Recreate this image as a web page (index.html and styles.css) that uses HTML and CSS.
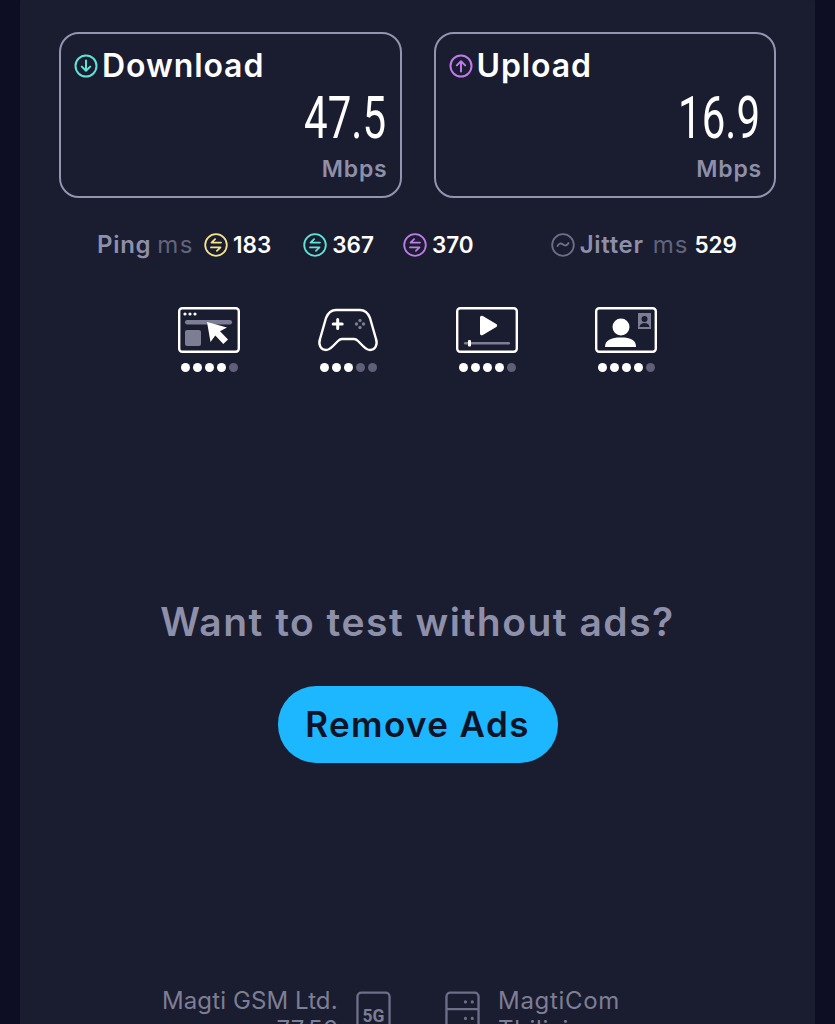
FILE: index.html
```html
<!DOCTYPE html>
<html lang="en">
<head>
    <meta charset="UTF-8">
    <meta name="viewport" content="width=device-width, initial-scale=1.0">
    <title>Speed test result</title>
    <link rel="stylesheet" href="styles.css">
</head>
<body>
    <div class="panel">
        <div class="speed-row">
            <div class="speed-card">
                <div class="speed-title">
                    <svg class="round-icon" viewBox="0 0 24 24" fill="none" stroke="#5fe3d6" stroke-width="2" stroke-linecap="round" stroke-linejoin="round">
                        <circle cx="12" cy="12" r="10.5"/>
                        <path d="M12 6.5v10M7.8 12.6l4.2 4.2 4.2-4.2"/>
                    </svg>
                    Download
                </div>
                <div class="speed-value">47.5</div>
                <div class="speed-unit">Mbps</div>
            </div>
            <div class="speed-card">
                <div class="speed-title">
                    <svg class="round-icon" viewBox="0 0 24 24" fill="none" stroke="#c07ae8" stroke-width="2" stroke-linecap="round" stroke-linejoin="round">
                        <circle cx="12" cy="12" r="10.5"/>
                        <path d="M12 17.5v-10M7.8 11.4l4.2-4.2 4.2 4.2"/>
                    </svg>
                    Upload
                </div>
                <div class="speed-value">16.9</div>
                <div class="speed-unit">Mbps</div>
            </div>
        </div>

        <div class="stats-row">
            <span class="stat-label">Ping</span>
            <span class="stat-unit">ms</span>
            <svg class="stat-icon first-icon" viewBox="0 0 24 24" fill="none" stroke="#f3e38a" stroke-width="1.8" stroke-linecap="round" stroke-linejoin="round">
                <circle cx="12" cy="12" r="10.8"/>
                <path d="M17 9.6H7.5l3.6-3.4M7 14.4h9.5l-3.600 3.400"/>
            </svg>
            <span class="stat-num">183</span>
            <svg class="stat-icon second-icon" viewBox="0 0 24 24" fill="none" stroke="#5fe3d6" stroke-width="1.8" stroke-linecap="round" stroke-linejoin="round">
                <circle cx="12" cy="12" r="10.8"/>
                <path d="M17 9.6H7.5l3.6-3.4M7 14.4h9.5l-3.600 3.400"/>
            </svg>
            <span class="stat-num">367</span>
            <svg class="stat-icon third-icon" viewBox="0 0 24 24" fill="none" stroke="#c07ae8" stroke-width="1.8" stroke-linecap="round" stroke-linejoin="round">
                <circle cx="12" cy="12" r="10.8"/>
                <path d="M17 9.6H7.5l3.6-3.4M7 14.4h9.5l-3.600 3.400"/>
            </svg>
            <span class="stat-num">370</span>
            <svg class="stat-icon jitter-icon" viewBox="0 0 24 24" fill="none" stroke="#6d6f88" stroke-width="1.8" stroke-linecap="round">
                <circle cx="12" cy="12" r="10.8"/>
                <path d="M6.5 13c1.500-3 3.500-3 5.500-1.500s4 1.500 5.500-1.500"/>
            </svg>
            <span class="stat-label jitter-label">Jitter</span>
            <span class="stat-unit jitter-unit">ms</span>
            <span class="stat-num jitter-num">529</span>
        </div>

        <div class="quality-row">
            <div class="quality-item">
                <svg class="quality-icon" viewBox="0 0 62 46" fill="none">
                    <rect x="1.200" y="1.200" width="59.600" height="43.600" rx="3" stroke="#fff" stroke-width="2.400"/>
                    <circle cx="7" cy="7" r="1.600" fill="#fff"/>
                    <circle cx="12" cy="7" r="1.600" fill="#fff"/>
                    <circle cx="17" cy="7" r="1.600" fill="#fff"/>
                    <rect x="7" y="13" width="47" height="4.500" rx="2.200" fill="#7d7e94"/>
                    <rect x="7" y="23" width="16" height="16" rx="2" fill="#7d7e94"/>
                    <path d="M29 15l3.500 20 4.800-6.500 8 8.500 4.700-4.500-8-8.300 7-3.700z" fill="#fff"/>
                </svg>
                <div class="dots"><i></i><i></i><i></i><i></i><i class="off"></i></div>
            </div>
            <div class="quality-item">
                <svg class="quality-icon" viewBox="0 0 62 46" fill="none">
                    <path d="M19 3h24c5 0 8 3 10 8l6 21c2 6-1 11-6 11-3 0-5-2-7-4l-5-5c-1-1-2-2-4-2H25c-2 0-3 1-4 2l-5 5c-2 2-4 4-7 4-5 0-8-5-6-11l6-21c2-5 5-8 10-8z" stroke="#fff" stroke-width="2.400" stroke-linejoin="round"/>
                    <path d="M20.700 12.500v9M16.200 17h9" stroke="#fff" stroke-width="3" stroke-linecap="round"/>
                    <circle cx="43" cy="13.500" r="1.700" fill="#7d7e94"/>
                    <circle cx="43" cy="20.500" r="1.700" fill="#7d7e94"/>
                    <circle cx="39.500" cy="17" r="1.700" fill="#7d7e94"/>
                    <circle cx="46.500" cy="17" r="1.700" fill="#7d7e94"/>
                </svg>
                <div class="dots"><i></i><i></i><i></i><i class="off"></i><i class="off"></i></div>
            </div>
            <div class="quality-item">
                <svg class="quality-icon" viewBox="0 0 62 46" fill="none">
                    <rect x="1.200" y="1.200" width="59.600" height="43.600" rx="3" stroke="#fff" stroke-width="2.400"/>
                    <path d="M24 10.500c0-1.500 1.500-2.300 2.800-1.500l13.500 8c1.200.8 1.200 2.300 0 3l-13.500 8c-1.300.8-2.800 0-2.800-1.500z" fill="#fff"/>
                    <rect x="8" y="35" width="46" height="2.500" rx="1.200" fill="#7d7e94"/>
                    <rect x="12" y="33" width="3" height="6.500" rx="1" fill="#fff"/>
                </svg>
                <div class="dots"><i></i><i></i><i></i><i></i><i class="off"></i></div>
            </div>
            <div class="quality-item">
                <svg class="quality-icon" viewBox="0 0 62 46" fill="none">
                    <rect x="1.200" y="1.200" width="59.600" height="43.600" rx="3" stroke="#fff" stroke-width="2.400"/>
                    <circle cx="26" cy="20" r="8.500" fill="#fff"/>
                    <path d="M10 40c0-7 6-9.500 16-9.500S41 33 41 40z" fill="#fff"/>
                    <rect x="43" y="6" width="13" height="16" fill="#7d7e94"/>
                    <circle cx="49.500" cy="12" r="3" fill="#1a1c30"/>
                    <path d="M44.500 20c.5-3 2.500-4 5-4s4.500 1 5 4z" fill="#1a1c30"/>
                </svg>
                <div class="dots"><i></i><i></i><i></i><i></i><i class="off"></i></div>
            </div>
        </div>

        <div class="ads-box">
            <div class="ads-text">Want to test without ads?</div>
            <a href="#" class="ads-button">Remove Ads</a>
        </div>

        <div class="server-row">
            <div class="server-side provider">
                <div class="server-name">Magti GSM Ltd.<br>77.56</div>
                <svg class="server-icon" viewBox="0 0 36 50" fill="none">
                    <rect x="1.500" y="1.500" width="33" height="47" rx="4" stroke="#6d6f88" stroke-width="2.400"/>
                    <text x="18" y="32" class="net-label">5G</text>
                </svg>
            </div>
            <div class="server-side host">
                <svg class="server-icon" viewBox="0 0 36 50" fill="none">
                    <rect x="1.500" y="1.500" width="33" height="47" rx="4" stroke="#6d6f88" stroke-width="2.400"/>
                    <path d="M1.500 18.500h33M1.500 35.500h33" stroke="#6d6f88" stroke-width="2.400"/>
                    <path d="M21 11h.1M28 11h.1M21 28h.1M28 28h.1" stroke="#6d6f88" stroke-width="3.200" stroke-linecap="round"/>
                </svg>
                <div class="server-name host-name">MagtiCom<br>Tbilisi</div>
            </div>
        </div>
    </div>
</body>
</html>
```
FILE: styles.css
```css
html, body {
    height: 1024px;
    overflow: hidden;
}

body {
    font-family: Inter, "Noto Sans", sans-serif;
    margin: 0;
    padding: 0;
    background-color: #0d0e24;
}

.panel {
    background-color: #1a1c30;
    margin: -20px 20px 0;
    padding: 52px 39px 0;
    height: 1100px;
    border-radius: 24px;
}

.speed-row {
    display: flex;
    gap: 32px;
}

.speed-card {
    flex: 1;
    height: 166px;
    box-sizing: border-box;
    border: 2px solid #9394ad;
    border-radius: 20px;
    padding: 14px 12px 0 13px;
    display: flex;
    flex-direction: column;
    align-items: flex-end;
}

.speed-title {
    align-self: flex-start;
    display: flex;
    align-items: center;
    gap: 4px;
    color: #fff;
    font-size: 32px;
    font-weight: 600;
    letter-spacing: 0.9px;
    line-height: 36px;
}

.round-icon {
    width: 24px;
    height: 24px;
}

.speed-value {
    font-family: Roboto, sans-serif;
    font-weight: 400;
    font-size: 60px;
    line-height: 60px;
    color: #fff;
    margin-top: 4px;
    margin-right: 2px;
    transform: scaleX(0.7);
    transform-origin: right center;
}

.speed-unit {
    color: #8e8fa8;
    font-size: 23px;
    font-weight: 600;
    letter-spacing: 0.8px;
    line-height: 28px;
    margin-top: 7px;
}

.stats-row {
    display: flex;
    align-items: center;
    height: 28px;
    margin-top: 33px;
    padding-left: 38px;
    font-size: 24px;
    line-height: 28px;
}

.stat-label {
    color: #8e8fa8;
    font-weight: 600;
    letter-spacing: 0.7px;
}

.stat-unit {
    color: #62647c;
    font-weight: 400;
    letter-spacing: 1.5px;
    margin-left: 6px;
}

.stat-num {
    color: #fff;
    font-size: 22.5px;
    font-weight: 600;
    margin-left: 5px;
}

.stat-icon {
    width: 24px;
    height: 24px;
    flex-shrink: 0;
}

.first-icon {
    margin-left: 10px;
}

.second-icon {
    margin-left: 32px;
}

.third-icon {
    margin-left: 29px;
}

.jitter-icon {
    margin-left: 77px;
}

.jitter-label {
    margin-left: 5px;
}

.jitter-unit {
    letter-spacing: 1px;
    margin-left: 9px;
}

.jitter-num {
    margin-left: 6px;
}

.quality-row {
    display: flex;
    gap: 77px;
    margin-top: 48px;
    padding-left: 119px;
}

.quality-item {
    width: 62px;
    display: flex;
    flex-direction: column;
    align-items: center;
}

.quality-icon {
    width: 62px;
    height: 46px;
    display: block;
}

.dots {
    display: flex;
    gap: 3px;
    margin-top: 10px;
}

.dots i {
    width: 9px;
    height: 9px;
    border-radius: 50%;
    background-color: #fff;
}

.dots i.off {
    background-color: #5f6078;
}

.ads-box {
    display: flex;
    flex-direction: column;
    align-items: center;
    margin-top: 227px;
}

.ads-text {
    color: #8e8fa8;
    font-size: 39px;
    font-weight: 600;
    letter-spacing: 1.5px;
    line-height: 46px;
}

.ads-button {
    margin-top: 41px;
    width: 280px;
    height: 77px;
    line-height: 77px;
    text-align: center;
    border-radius: 38px;
    background-color: #1cb7ff;
    color: #101326;
    font-size: 35px;
    font-weight: 600;
    letter-spacing: 1.4px;
    text-decoration: none;
}

.server-row {
    display: flex;
    margin-top: 223px;
    padding-left: 103px;
}

.server-side {
    display: flex;
    gap: 18px;
    align-items: flex-start;
}

.provider {
    width: 230px;
}

.host {
    margin-left: 53px;
}

.server-name {
    color: #7d7e94;
    font-size: 24px;
    letter-spacing: 0.1px;
    line-height: 29px;
    white-space: nowrap;
}

.provider .server-name {
    text-align: right;
}

.host-name {
    letter-spacing: 0.7px;
}

.server-icon {
    width: 35px;
    height: 49px;
    margin-top: 5px;
    flex-shrink: 0;
}

.net-label {
    fill: #7d7e94;
    font-family: Roboto, sans-serif;
    font-size: 18px;
    font-weight: 700;
    text-anchor: middle;
}
```
